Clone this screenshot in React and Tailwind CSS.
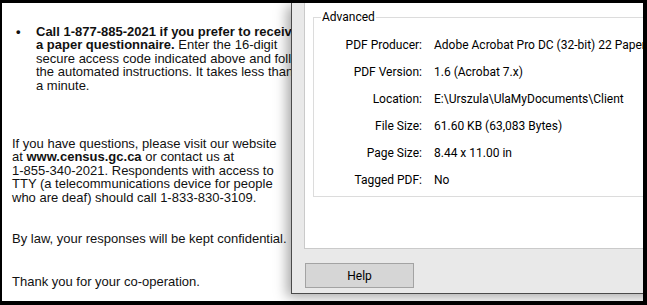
import React from 'react';

const docFont = { fontFamily: '"Liberation Sans", Arial, sans-serif' };
const uiFont = { fontFamily: 'Roboto, "Noto Sans", sans-serif' };

const props = [
  ['PDF Producer:', 'Adobe Acrobat Pro DC (32-bit) 22 Paper Capture Plug-in'],
  ['PDF Version:', '1.6 (Acrobat 7.x)'],
  ['Location:', 'E:\\Urszula\\UlaMyDocuments\\Client'],
  ['File Size:', '61.60 KB (63,083 Bytes)'],
  ['Page Size:', '8.44 x 11.00 in'],
  ['Tagged PDF:', 'No'],
];

function Letter() {
  return (
    <div
      className="w-[289px] shrink-0 overflow-hidden bg-white text-[13px] leading-[13.4px] text-[#111] whitespace-nowrap"
      style={docFont}
    >
      <div className="flex pt-[22px] pl-[14px]">
        <span className="w-[20px] shrink-0 font-bold">•</span>
        <div>
          <div className="font-bold">Call 1-877-885-2021 if you prefer to receive a</div>
          <div>
            <b>a paper questionnaire.</b> Enter the 16-digit
          </div>
          <div>secure access code indicated above and follow</div>
          <div>the automated instructions. It takes less than</div>
          <div>a minute.</div>
        </div>
      </div>

      <div className="mt-[45px] pl-[10px]">
        <div>If you have questions, please visit our website</div>
        <div>
          at <b>www.census.gc.ca</b> or contact us at
        </div>
        <div>1-855-340-2021. Respondents with access to</div>
        <div>TTY (a telecommunications device for people</div>
        <div>who are deaf) should call 1-833-830-3109.</div>
      </div>

      <p className="mt-[28px] pl-[10px]">By law, your responses will be kept confidential.</p>
      <p className="mt-[30px] pl-[10px]">Thank you for your co-operation.</p>
    </div>
  );
}

function PropertiesDialog() {
  return (
    <div
      className="relative z-10 w-[420px] shrink-0 h-[291px] bg-[#e9e9e9] border-l border-b border-[#4a4a4a] pl-[12px] shadow-[-4px_3px_12px_rgba(0,0,0,0.35)] text-[12px] text-black"
      style={uiFont}
    >
      <div className="h-[246px] bg-white border-l border-b border-[#cacaca] pl-[8px] pt-[6px]">
        <fieldset className="border border-[#dcdcdc] pl-[7px] pt-[6px] pb-[3px]">
          <legend className="px-[1px] leading-[16px]">Advanced</legend>
          {props.map(([label, value]) => (
            <div key={label} className="flex h-[27px] items-center whitespace-nowrap">
              <span className="w-[101px] shrink-0 text-right">{label}</span>
              <span className="ml-[12px]">{value}</span>
            </div>
          ))}
        </fieldset>
      </div>
      <button className="mt-[14px] ml-[1px] w-[109px] h-[25px] bg-[#d6d6d6] border border-[#a3a3a3] leading-none">
        Help
      </button>
    </div>
  );
}

export default function App() {
  return (
    <div className="w-[647px] h-[305px] bg-black pt-[3px] pl-[2px] pr-[4px] pb-[4px]">
      <div className="flex h-full overflow-hidden bg-white">
        <Letter />
        <PropertiesDialog />
      </div>
    </div>
  );
}
